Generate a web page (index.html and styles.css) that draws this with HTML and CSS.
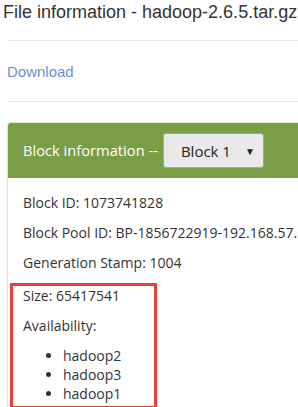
FILE: index.html
```html
<!DOCTYPE html>
<html>
<head>
<meta charset="utf-8">
<link rel="stylesheet" href="styles.css">
</head>
<body>
<div class="page">
  <h4 class="title">File information - hadoop-2.6.5.tar.gz</h4>
  <div class="rule"></div>
  <div class="download-row"><a class="download" href="#">Download</a></div>
  <div class="rule"></div>
  <div class="panel">
    <div class="panel-heading">
      <span class="heading-text">Block information --</span>
      <div class="select"><span class="select-value">Block 1</span><span class="caret">▼</span></div>
    </div>
    <div class="panel-body">
      <p>Block ID: 1073741828</p>
      <p>Block Pool ID: BP-1856722919-192.168.57.101-1497318123458</p>
      <p>Generation Stamp: 1004</p>
      <div class="highlight">
        <p>Size: 65417541</p>
        <p>Availability:</p>
        <ul>
          <li>hadoop2</li>
          <li>hadoop3</li>
          <li>hadoop1</li>
        </ul>
      </div>
    </div>
  </div>
</div>
</body>
</html>
```

FILE: styles.css
```css
html, body {
  margin: 0;
  padding: 0;
  background: #fff;
  overflow: hidden;
}
.page {
  width: 700px;
  font-family: "Open Sans", "Noto Sans", sans-serif;
  color: #333;
}
.title {
  margin: 0;
  height: 40px;
  padding: 1px 0 0 3px;
  box-sizing: border-box;
  font-family: "Liberation Sans", Arial, sans-serif;
  font-weight: normal;
  font-size: 18px;
  line-height: 22px;
  color: #333;
  white-space: nowrap;
}
.rule {
  margin-left: 7px;
  height: 1px;
  background: #e5e5e5;
}
.download-row {
  height: 60px;
  padding-left: 7px;
  display: flex;
  align-items: center;
}
.download {
  font-family: "Liberation Sans", Arial, sans-serif;
  font-size: 15px;
  color: #6b8fd4;
  text-decoration: none;
}
.panel {
  margin: 20px 0 0 7px;
  border: 1px solid #dfe8d0;
  border-radius: 4px;
  overflow: hidden;
}
.panel-heading {
  height: 56px;
  margin: -1px -1px 0 -1px;
  background: #7a9e45;
  padding-left: 16px;
  display: flex;
  align-items: center;
  gap: 5px;
}
.heading-text {
  color: #fff;
  font-size: 14.7px;
}
.select {
  width: 101px;
  height: 35px;
  box-sizing: border-box;
  border: 1px solid #8ea6cf;
  border-radius: 3px;
  background: #e9e9e9;
  display: flex;
  align-items: center;
  justify-content: space-between;
  padding: 0 8px 0 17px;
  margin-top: 1px;
  font-size: 15px;
  color: #222;
}
.caret {
  font-size: 10px;
  color: #222;
}
.panel-body {
  padding: 15px 15px 0 15px;
  font-size: 14px;
}
.panel-body p {
  margin: 0 0 10px 0;
  line-height: 20px;
  white-space: nowrap;
}
.highlight {
  width: 147px;
  box-sizing: border-box;
  margin-left: -13px;
  border: 3px solid #ee3b3b;
  padding: 0 0 3px 10px;
}
.highlight ul {
  margin: 0;
  padding-left: 40px;
}
.highlight li {
  line-height: 19px;
}
```
